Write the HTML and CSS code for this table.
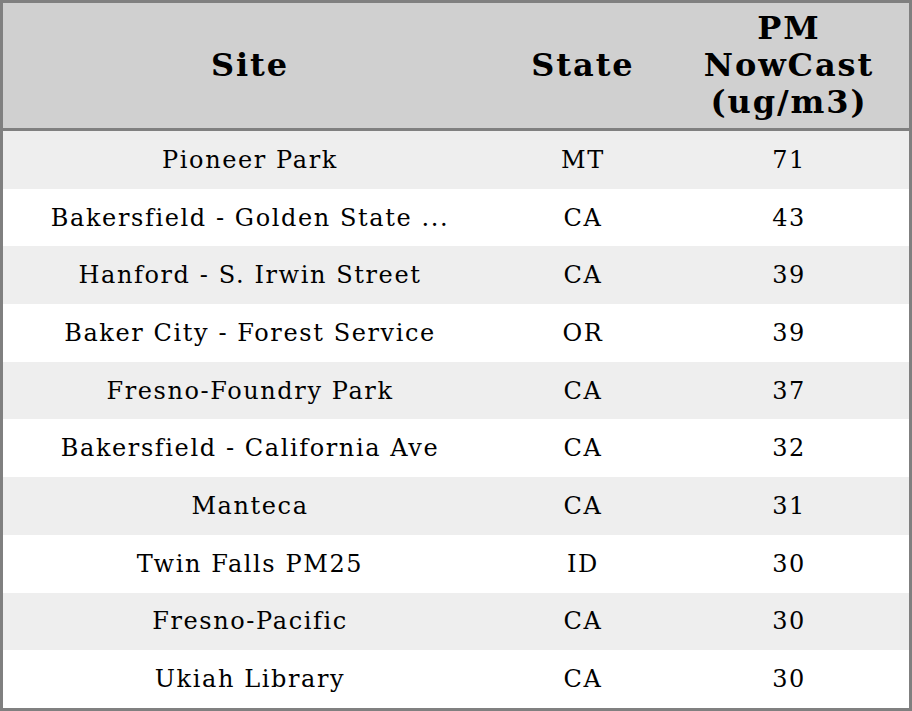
FILE: index.html
```html
<!DOCTYPE html>
<html>
<head>
<meta charset="utf-8">
<link rel="stylesheet" href="styles.css">
</head>
<body>
<table class="aq">
  <thead>
    <tr>
      <th class="c-site">Site</th>
      <th class="c-state">State</th>
      <th class="c-pm">PM<br>NowCast<br>(ug/m3)</th>
    </tr>
  </thead>
  <tbody>
    <tr><td>Pioneer Park</td><td>MT</td><td>71</td></tr>
    <tr><td>Bakersfield - Golden State ...</td><td>CA</td><td>43</td></tr>
    <tr><td>Hanford - S. Irwin Street</td><td>CA</td><td>39</td></tr>
    <tr><td>Baker City - Forest Service</td><td>OR</td><td>39</td></tr>
    <tr><td>Fresno-Foundry Park</td><td>CA</td><td>37</td></tr>
    <tr><td>Bakersfield - California Ave</td><td>CA</td><td>32</td></tr>
    <tr><td>Manteca</td><td>CA</td><td>31</td></tr>
    <tr><td>Twin Falls PM25</td><td>ID</td><td>30</td></tr>
    <tr><td>Fresno-Pacific</td><td>CA</td><td>30</td></tr>
    <tr><td>Ukiah Library</td><td>CA</td><td>30</td></tr>
  </tbody>
</table>
</body>
</html>
```

FILE: styles.css
```css
html, body {
  margin: 0;
  padding: 0;
  background: #ffffff;
}

.aq {
  width: 912px;
  height: 711px;
  border-collapse: collapse;
  border: 3px solid #808080;
  font-family: "DejaVu Serif", serif;
  color: #000;
  table-layout: fixed;
}

.aq thead tr {
  background: #d0d0d0;
  border-bottom: 3px solid #808080;
}

.aq th {
  height: 125px;
  padding: 0;
  font-size: 32px;
  font-weight: bold;
  letter-spacing: 1.9px;
  line-height: 37px;
  text-align: center;
  vertical-align: middle;
}

.c-site { width: 494px; }
.c-state { width: 172px; }
.c-pm { width: 240px; }

.aq td {
  height: 57.7px;
  padding: 0;
  font-size: 24px;
  letter-spacing: 1.6px;
  text-align: center;
  vertical-align: middle;
  white-space: nowrap;
}

.aq tbody tr:nth-child(odd) {
  background: #eeeeee;
}

.aq tbody tr:nth-child(even) {
  background: #ffffff;
}
```
